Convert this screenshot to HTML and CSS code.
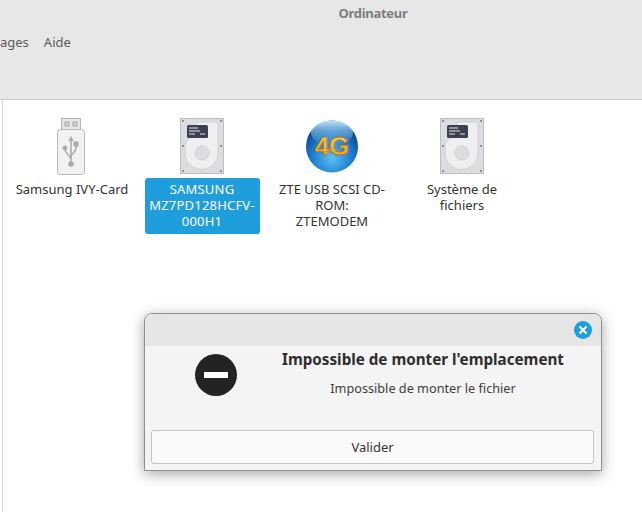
FILE: index.html
```html
<!DOCTYPE html>
<html lang="fr">
<head>
  <meta charset="UTF-8">
  <title>Ordinateur</title>
  <link rel="stylesheet" href="styles.css">
</head>
<body>
  <div class="window">
    <header class="topbar">
      <div class="title">Ordinateur</div>
      <nav class="menu">
        <span>ages</span>
        <span>Aide</span>
      </nav>
    </header>

    <main class="content">
      <ul class="grid">
        <li class="item">
          <svg class="icon" width="52" height="58" viewBox="0 0 52 58">
            <rect x="15.500" y="0.500" width="19" height="12" fill="#e6e6e6" stroke="#b5b5b5"/>
            <rect x="19" y="4" width="4" height="4" fill="#ccc" stroke="#aaa"/>
            <rect x="27" y="4" width="4" height="4" fill="#ccc" stroke="#aaa"/>
            <rect x="11.500" y="11.500" width="27" height="45" rx="3" fill="#f2f2f2" stroke="#b9b9b9"/>
            <path d="M25 20v26M19 31c0 6 6 5 6 11M30 27v3c0 5-5 5-5 9" fill="none" stroke="#aaa" stroke-width="1.500"/>
            <path d="M25 18l-2.500 5h5z" fill="#aaa"/>
            <circle cx="19" cy="30" r="2.400" fill="#aaa"/>
            <rect x="27.500" y="23.500" width="5" height="5" fill="#aaa"/>
            <circle cx="25" cy="46" r="2.800" fill="#aaa"/>
          </svg>
          <span class="label">Samsung IVY-Card</span>
        </li>
        <li class="item selected">
          <svg class="icon" width="52" height="58" viewBox="0 0 52 58">
            <use href="#disk"/>
          </svg>
          <span class="label">SAMSUNG MZ7PD128HCFV-000H1</span>
        </li>
        <li class="item">
          <svg class="icon" width="52" height="58" viewBox="0 0 52 58">
            <defs>
              <radialGradient id="ball" cx="50%" cy="72%" r="68%">
                <stop offset="0" stop-color="#5cc0f4"/>
                <stop offset="0.6" stop-color="#1878cc"/>
                <stop offset="1" stop-color="#0a3a7c"/>
              </radialGradient>
              <linearGradient id="shine" x1="0" y1="0" x2="0" y2="1">
                <stop offset="0" stop-color="#c8eeff" stop-opacity="0.95"/>
                <stop offset="1" stop-color="#5fb5ee" stop-opacity="0.1"/>
              </linearGradient>
              <linearGradient id="gold" x1="0" y1="0" x2="0" y2="1">
                <stop offset="0" stop-color="#ffd860"/>
                <stop offset="1" stop-color="#f39a12"/>
              </linearGradient>
            </defs>
            <circle cx="26" cy="28.500" r="26" fill="url(#ball)"/>
            <ellipse cx="26" cy="15" rx="21" ry="12.500" fill="url(#shine)"/>
            <text class="badge" x="26" y="37" text-anchor="middle" fill="url(#gold)" stroke="#b87414" stroke-width="0.800">4G</text>
          </svg>
          <span class="label">ZTE USB SCSI CD-ROM:<br>ZTEMODEM</span>
        </li>
        <li class="item">
          <svg class="icon" width="52" height="58" viewBox="0 0 52 58">
            <g id="disk">
              <rect x="4.500" y="0.500" width="43" height="55" fill="#dcdde0" stroke="#bdbec2"/>
              <path d="M21 4H39a3 3 0 0 1 3 3V35a16.500 16.500 0 0 1-33 0V29c0-5 4-9 9-11z" fill="#eeeff1" stroke="#cfd0d3"/>
              <circle cx="26" cy="35" r="7" fill="#dcdde0" stroke="#cfd0d3"/>
              <rect x="11" y="7" width="21" height="13" rx="1.500" fill="#3d4050"/>
              <path d="M13 10h9M13 13h11M13 16h6M24 16h5" stroke="#e6e6e6" stroke-width="1"/>
              <g fill="#8f9094">
                <rect x="6" y="2" width="2" height="2"/>
                <rect x="44" y="2" width="2" height="2"/>
                <rect x="6" y="27" width="2" height="2"/>
                <rect x="44" y="27" width="2" height="2"/>
                <rect x="6" y="52" width="2" height="2"/>
                <rect x="44" y="52" width="2" height="2"/>
              </g>
            </g>
          </svg>
          <span class="label">Système de fichiers</span>
        </li>
      </ul>
    </main>

    <div class="dialog">
      <div class="dialog-head">
        <span class="close">
          <svg width="10" height="10" viewBox="0 0 10 10">
            <path d="M1.500 1.500l7 7M8.500 1.500l-7 7" stroke="#fff" stroke-width="2.200"/>
          </svg>
        </span>
      </div>
      <div class="dialog-body">
        <div class="stop"><span class="stop-bar"></span></div>
        <div class="dialog-text">
          <h1>Impossible de monter l'emplacement</h1>
          <p>Impossible de monter le fichier</p>
        </div>
      </div>
      <button class="ok">Valider</button>
    </div>
  </div>
</body>
</html>
```

FILE: styles.css
```css
body{
  margin: 0;
  font-family: "Noto Sans", sans-serif;
  font-size: 13px;
  color: #3d3d3d;
}
.window{
  position: relative;
  width: 642px;
  height: 512px;
  overflow: hidden;
  background: white;
}
.topbar{
  height: 99px;
  background: #e7e7e7;
  border-bottom: 1px solid #cccccc;
}
.title{
  padding: 4px 0 0 104px;
  text-align: center;
  font-weight: bold;
  line-height: 18px;
  letter-spacing: -0.3px;
  color: #7d7d7d;
}
.menu{
  display: flex;
  gap: 15px;
  margin-top: 11px;
  line-height: 18px;
  color: #5c5c5c;
}
.content{
  height: 412px;
  margin-left: 2px;
  border-left: 1px solid #d4d4d4;
}
.grid{
  display: grid;
  grid-template-columns: repeat(4, 130px);
  margin: 0;
  padding: 18px 0 0 4px;
  list-style: none;
}
.item{
  display: flex;
  flex-direction: column;
  align-items: center;
  text-align: center;
  color: #333;
}
.icon{
  display: block;
  height: 58px;
  margin-bottom: 2px;
}
.label{
  width: 115px;
  box-sizing: border-box;
  padding: 3px 0;
  line-height: 16px;
  border-radius: 3px;
}
.selected .label{
  padding: 3px 3px 5px;
  background: #1f9ede;
  color: white;
  letter-spacing: 0.2px;
}
.badge{
  font-family: "Liberation Sans", sans-serif;
  font-size: 26px;
  font-weight: bold;
}
.dialog{
  position: absolute;
  left: 144px;
  top: 313px;
  width: 456px;
  height: 156px;
  display: flex;
  flex-direction: column;
  background: #f4f4f4;
  border: 1px solid #8f8f8f;
  border-radius: 8px 8px 0 0;
  box-shadow: 0 3px 14px rgba(0, 0, 0, 0.35);
}
.dialog-head{
  display: flex;
  justify-content: flex-end;
  align-items: center;
  height: 32px;
  padding-right: 9px;
  background: #e6e6e6;
  border-radius: 7px 7px 0 0;
}
.close{
  display: flex;
  align-items: center;
  justify-content: center;
  width: 18px;
  height: 18px;
  border-radius: 50%;
  background: #1f9ede;
}
.dialog-body{
  display: flex;
  flex: 1;
  padding-top: 3px;
}
.stop{
  display: flex;
  align-items: center;
  justify-content: center;
  width: 42px;
  height: 42px;
  margin: 5px 0 0 50px;
  border-radius: 50%;
  background: #232323;
}
.stop-bar{
  width: 24px;
  height: 6px;
  background: white;
}
.dialog-text{
  width: 340px;
  margin-left: 16px;
  text-align: center;
}
.dialog-text h1{
  margin: 0;
  font-size: 15.200px;
  line-height: 20px;
  color: #2e2e2e;
}
.dialog-text p{
  margin: 10px 0 0;
  line-height: 18px;
  font-size: 12.700px;
}
.ok{
  height: 34px;
  margin: 0 7px 6px 6px;
  background: #fafafa;
  border: 1px solid #c4c4c4;
  border-radius: 3px;
  font: inherit;
  color: #333;
}
```
